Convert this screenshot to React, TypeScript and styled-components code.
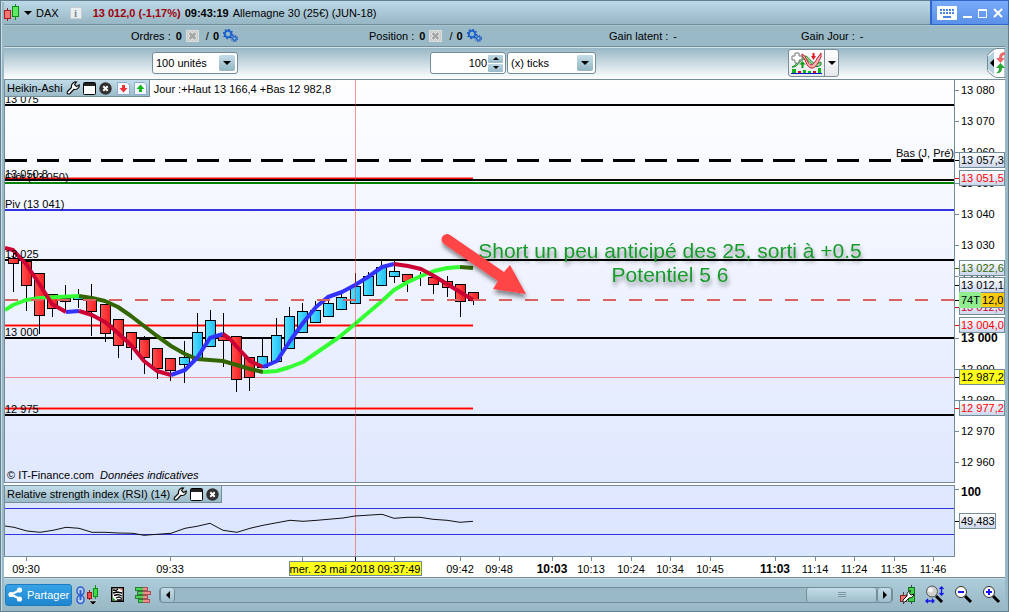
import React from "react";
import styled, { createGlobalStyle, css } from "styled-components";

const GlobalStyle = createGlobalStyle`
  *, *::before, *::after { box-sizing: border-box; }
  body {
    margin: 0;
    font-family: "Liberation Sans", Arial, sans-serif;
    font-size: 11px;
    line-height: 14px;
    color: #000;
  }
  button, input, select { font: inherit; color: inherit; margin: 0; }
  svg { display: block; flex: none; }
`;

const LINE = "#728c99";

/* ---------- frame ---------- */

const Window = styled.main`
  display: flex;
  flex-direction: column;
  min-height: 100vh;
  padding: 0 3px;
  border: 1px solid #64808f;
  background: #9ab9c7;
  box-shadow: inset 1px 1px 0 #c6dde8;
`;

const TitleBar = styled.header`
  display: flex;
  align-items: center;
  height: 24px;
  border-bottom: 1px solid ${LINE};
  background: linear-gradient(#bcd9e7, #97b6c4);
`;

const TitleMenu = styled.button`
  display: flex;
  align-items: center;
  gap: 4px;
  padding: 0;
  border: 0;
  background: none;
`;

const InfoButton = styled.button`
  width: 12px;
  height: 12px;
  margin: 0 11px;
  padding: 0;
  border: 1px solid #c9ccce;
  background: #e9eef1;
  color: #7d858a;
  font: bold 11px/10px "Liberation Serif", serif;
`;

const Quote = styled.div`
  display: flex;
  gap: 4px;
  white-space: nowrap;
`;

const Change = styled.strong`
  color: #a0000c;
`;

const WindowControls = styled.div`
  display: flex;
  align-items: center;
  gap: 6px;
  align-self: stretch;
  width: 79px;
  margin: -1px -4px -1px auto;
  padding-left: 5px;
  border: 1px solid #2f67c6;
  border-left-width: 2px;
  background: linear-gradient(#78abfa, #5b90e8);
`;

const GhostButton = styled.button`
  display: flex;
  padding: 0;
  border: 0;
  background: none;
`;

const StatusBar = styled.section`
  display: grid;
  grid-template-columns: 238fr 240fr 192fr 204fr;
  align-items: center;
  height: 22px;
  padding-left: 127px;
  border-bottom: 1px solid ${LINE};
  background: #9ab9c7;
  box-shadow: inset 0 1px 0 #a9c6d3;
`;

const Status = styled.div`
  display: flex;
  align-items: center;
  gap: 4px;
  white-space: nowrap;
`;

const Label = styled.span`
  margin-right: 1px;
`;

const Automated = styled.span`
  display: flex;
  align-items: center;
  gap: 4px;
  margin-left: 3px;
`;

const ToolBar = styled.section`
  display: grid;
  grid-template-columns: 426fr 358fr 217fr;
  height: 33px;
  border-top: 1px solid #d3e4ec;
  border-bottom: 1px solid ${LINE};
  background: linear-gradient(#98b7c5, #fff);
`;

const ToolGroup = styled.div<{ $indent?: boolean }>`
  display: flex;
  align-items: center;
  gap: 1px;
  padding-left: ${(p) => (p.$indent ? "148px" : "0")};
  padding-bottom: 2px;
`;

const fieldBox = css`
  height: 22px;
  border: 1px solid ${LINE};
  border-radius: 3px;
  background: #fff;
`;

const Field = styled.label<{ $width: number }>`
  ${fieldBox}
  position: relative;
  display: flex;
  width: ${(p) => p.$width}px;
`;

const Picker = styled.select`
  appearance: none;
  width: 100%;
  padding: 0 20px 0 3px;
  border: 0;
  background: none;
  outline: none;
`;

const PickerArrow = styled.span`
  position: absolute;
  top: 2px;
  right: 2px;
  display: grid;
  place-items: center;
  width: 16px;
  height: 16px;
  border-radius: 2px;
  background: linear-gradient(#c3dde8, #93b4c3);
  pointer-events: none;
`;

const NumberBox = styled.div`
  ${fieldBox}
  display: flex;
  align-items: center;
  width: 76px;
`;

const NumberInput = styled.input`
  flex: 1;
  min-width: 0;
  padding: 0 1px;
  border: 0;
  background: none;
  text-align: right;
  outline: none;
`;

const Steppers = styled.div`
  display: grid;
  gap: 1px;
  margin-right: 2px;
`;

const Stepper = styled.button`
  display: grid;
  place-items: center;
  width: 15px;
  height: 8px;
  padding: 0;
  border: 0;
  border-radius: 1px;
  background: linear-gradient(#bcd7e3, #98b8c7);
`;

const SplitButton = styled.div`
  display: flex;
  height: 28px;
  border: 1px solid #7b8e98;
  border-radius: 3px;
  background: linear-gradient(#fff, #e6e8ea);
`;

const SplitPart = styled.button<{ $arrow?: boolean }>`
  display: grid;
  place-items: center;
  width: ${(p) => (p.$arrow ? "14px" : "35px")};
  padding: 0;
  border: 0;
  border-left: ${(p) => (p.$arrow ? "1px solid #7b8e98" : "0")};
  background: none;
`;

const SideTab = styled(GhostButton)`
  margin-left: auto;
`;

/* ---------- charts ---------- */

const Workspace = styled.section`
  flex: 1;
  background: #fff;
`;

const ChartRow = styled.div<{ $gap?: boolean }>`
  display: flex;
  margin-bottom: ${(p) => (p.$gap ? "2px" : "0")};
`;

const Plot = styled.div<{ $from: string; $to: string; $topLine?: boolean }>`
  position: relative;
  flex: 1;
  min-width: 0;
  border: 1px solid ${LINE};
  border-top-width: ${(p) => (p.$topLine ? "1px" : "0")};
  background: linear-gradient(${(p) => p.$from}, ${(p) => p.$to});
`;

const PlotHeader = styled.div`
  position: absolute;
  top: 0;
  left: 0;
  display: flex;
  align-items: center;
  white-space: nowrap;
`;

const PlotTitle = styled.div`
  display: flex;
  align-items: center;
  gap: 3px;
  height: 17px;
  padding: 0 2px;
  border: solid ${LINE};
  border-width: 0 1px 1px 0;
  background: linear-gradient(#c2dde9, #9bbac8);
`;

const Extremes = styled.span`
  margin-left: 4px;
`;

const Credits = styled.p`
  position: absolute;
  bottom: 0;
  left: 2px;
  margin: 0;
`;

const Svg = styled.svg<{ $fluid?: boolean }>`
  width: ${(p) => (p.$fluid ? "100%" : "50px")};
  overflow: hidden;
  font-size: 11px;
`;

const TimeAxis = styled.svg`
  width: 100%;
  height: 20px;
  background: #fff;
  font-size: 11px;
`;

/* ---------- bottom bar ---------- */

const BottomBar = styled.footer`
  display: flex;
  align-items: center;
  height: 34px;
  padding: 0 4px 0 1px;
  border-top: 1px solid ${LINE};
  background: linear-gradient(#aecddb, #98b7c5);
  box-shadow: inset 0 1px 0 #c6dde8;
`;

const ShareButton = styled.button`
  display: flex;
  align-items: center;
  gap: 4px;
  height: 22px;
  padding: 0 2px;
  border: 1px solid #1d7cc0;
  border-radius: 3px;
  background: linear-gradient(#38a2e6, #1d86cf);
  color: #fff;
`;

const IconRow = styled.div<{ $gap: number; $pad: string }>`
  display: flex;
  align-items: center;
  gap: ${(p) => p.$gap}px;
  padding: ${(p) => p.$pad};
`;

const ScrollBar = styled.div`
  display: flex;
  flex: 1;
  height: 16px;
  border: 1px solid ${LINE};
  border-radius: 4px;
  background: #9ab9c7;
`;

const ScrollPart = styled.button<{ $thumb?: boolean }>`
  display: grid;
  place-items: center;
  width: ${(p) => (p.$thumb ? "71px" : "15px")};
  margin-left: ${(p) => (p.$thumb ? "auto" : "0")};
  padding: 0;
  border: solid ${LINE};
  border-width: 0 1px;
  border-radius: 3px;
  background: linear-gradient(#c3dde9, #9ebdcb);
`;

/* ---------- icons ---------- */

const Triangle = ({ dir = "down", size = 4 }: { dir?: "down" | "up" | "left" | "right"; size?: number }) => {
  const s = size;
  const shapes = {
    down: [2 * s, s, `M0 0H${2 * s}L${s} ${s}Z`],
    up: [2 * s, s, `M0 ${s}H${2 * s}L${s} 0Z`],
    left: [s, 2 * s, `M${s} 0V${2 * s}L0 ${s}Z`],
    right: [s, 2 * s, `M0 0V${2 * s}L${s} ${s}Z`],
  } as const;
  const [w, h, d] = shapes[dir];
  return (
    <svg width={w} height={h}>
      <path d={d} />
    </svg>
  );
};

const CandlesIcon = () => (
  <svg width="16" height="17" shapeRendering="crispEdges">
    <path d="M3.500 4V17" stroke="#9b2020" />
    <rect x=".5" y="6.500" width="6" height="8" fill="#f07777" stroke="#b01c1c" />
    <path d="M11.500 0V16" stroke="#0b8f10" />
    <rect x="8.500" y="2.500" width="6" height="10" fill="#5fe863" stroke="#0b8f10" />
  </svg>
);

const KeyboardIcon = () => (
  <svg width="20" height="14">
    <rect width="20" height="14" rx="1" fill="#fff" />
    <path d="M3 4H17M3 7H17" stroke="#4c84e4" strokeWidth="2" strokeDasharray="2 1" />
    <path d="M6 11H14" stroke="#4c84e4" strokeWidth="2" />
  </svg>
);

const MinimizeIcon = () => (
  <svg width="9" height="14"><path d="M0 11H9" stroke="#fff" strokeWidth="2" /></svg>
);
const MaximizeIcon = () => (
  <svg width="9" height="14"><path d="M.5 3V11.500H8.500V3" fill="none" stroke="#fff" /><path d="M0 4H9" stroke="#fff" strokeWidth="2" /></svg>
);
const CloseIcon = () => (
  <svg width="10" height="14"><path d="M1 3L9 11M9 3L1 11" stroke="#fff" strokeWidth="2" /></svg>
);

const CancelIcon = () => (
  <svg width="13" height="12">
    <rect x=".5" y=".5" width="12" height="11" fill="#c8cbc9" stroke="#dcdedd" />
    <path d="M3 2.500L10 9.500M10 2.500L3 9.500" stroke="#eceeec" strokeWidth="4" />
    <path d="M3.500 3L9.500 9M9.500 3L3.500 9" stroke="#a2a6a4" strokeWidth="2.500" />
  </svg>
);

const GearsIcon = () => (
  <svg width="16" height="14" fill="none">
    <circle cx="5" cy="5" r="3.200" stroke="#1b66cf" strokeWidth="2" />
    <circle cx="5" cy="5" r="4.500" stroke="#1b4fc0" strokeWidth="1.500" strokeDasharray="1.500 2" />
    <circle cx="11.500" cy="9.500" r="1.800" stroke="#1b66cf" strokeWidth="1.300" />
    <circle cx="11.500" cy="9.500" r="3" stroke="#1b4fc0" strokeWidth="1.200" strokeDasharray="1.200 1.150" />
  </svg>
);

const IndicatorIcon = () => (
  <svg width="31" height="22" fill="none">
    <path d="M1 15C6 14 9 4 14 4S21 16 30 10V13C22 19 19 7 14 7S7 16 1 15Z" fill="#9adf9f" stroke="#118a1d" />
    <path d="M11 2C15 3 17 13 20 13S26 6 30 1V5C28 9 25 17 20 16S15 7 11 4Z" fill="#f6b6b6" stroke="#c01b2a" />
    <path d="M4 1H8V4H11V8H8V11H4V8H1V4H4Z" fill="#fff" stroke="#777" />
    <path d="M10.500 16V12.500H8.500L11.500 9L14.500 12.500H12.500V16Z" fill="#0a9b15" />
    <path d="M21.500 1V4H20L22.500 8L25 4H23.500V1Z" fill="#e01b2a" />
    <path d="M1 17H5V21H1ZM12 18H15V21H12ZM17 19H20V21H17ZM27 16H30V21H27Z" fill="#10b21a" />
    <path d="M7 19H10V21H7ZM22 19H25V21H22Z" fill="#c0142a" />
    <path d="M0 21.500H31" stroke="#1515c8" />
  </svg>
);

const SideTabIcon = () => (
  <svg width="18" height="30" fill="none">
    <path d="M18 .5H10Q7 .5 5 3L1.500 6Q.5 7 .5 9V21Q.5 23 1.500 24L5 27Q7 29.500 10 29.500H18Z" fill="#fff" stroke={LINE} />
    <path d="M1 9V21L7 27V3Z" fill="#b6d1de" />
    <path d="M3 15L7 11V19Z" fill="#000" />
    <path d="M18 4Q12 4 12 10H9L13.500 15L18 10H15Q15 7 18 7Z" fill="#e96a6a" />
    <path d="M9 25Q12 24 12 20H9L13.500 15L18 20H15Q15 26 9 25Z" fill="#28a834" />
  </svg>
);

const WrenchIcon = () => (
  <svg width="14" height="14">
    <path
      d="M1.500 10.500L5.500 6.500Q5 3.500 7 2Q8.500 .8 10.500 1L8.500 3.500L10.500 5.500L13.200 4Q13.500 6 12 7.300Q10.300 9 8 8.300L4 12.500Q2.500 13.500 1.500 12.500Q.8 11.500 1.500 10.500Z"
      fill="#fff" stroke="#111" strokeWidth="1.200"
    />
  </svg>
);
const PanelIcon = () => (
  <svg width="13" height="13">
    <rect x=".5" y=".5" width="12" height="12" rx="1" fill="#fff" stroke="#000" />
    <rect x="1" y="1" width="11" height="3" fill="#222" />
  </svg>
);
const RoundCloseIcon = () => (
  <svg width="13" height="13">
    <circle cx="6.500" cy="6.500" r="6.200" fill="#333" />
    <path d="M4.300 4.300L8.700 8.700M8.700 4.300L4.300 8.700" stroke="#fff" strokeWidth="2" />
  </svg>
);
const PageArrowIcon = ({ up }: { up?: boolean }) => (
  <svg width="13" height="13">
    <path d="M.5 .5H10L12.500 3V12.500H.5Z" fill="#f3f7ff" stroke="#8fa9d2" />
    {up ? (
      <path d="M6.500 2.500L10.500 7H8V10H5V7H2.500Z" fill="#17b51e" />
    ) : (
      <path d="M6.500 10.500L10.500 6H8V3H5V6H2.500Z" fill="#ee2f35" />
    )}
  </svg>
);

const ShareIcon = () => (
  <svg width="15" height="15" fill="#fff">
    <path d="M12 3L3 7.500L12 12" fill="none" stroke="#fff" strokeWidth="2" />
    <circle cx="11.500" cy="3" r="2.600" /><circle cx="3" cy="7.500" r="2.600" /><circle cx="11.500" cy="12" r="2.600" />
  </svg>
);

const LinkCandlesIcon = () => (
  <svg width="24" height="20" fill="none">
    <g stroke="#2c5fd0" strokeWidth="1.500">
      <rect x="1" y="2" width="7" height="8" rx="3.500" fill="#b7cdf5" />
      <rect x="1" y="10.500" width="7" height="8" rx="3.500" fill="#b7cdf5" />
      <path d="M4.500 5V15" strokeWidth="2" />
    </g>
    <path d="M13.500 5V15" stroke="#a01818" />
    <rect x="11.500" y="7.500" width="4" height="6" fill="#ef4a4a" stroke="#a01818" />
    <path d="M19.500 0V14" stroke="#0b8f10" />
    <rect x="17.500" y="3.500" width="4" height="8" fill="#3fdc48" stroke="#0b8f10" />
    <path d="M13 16H21L17 20Z" fill="#000" stroke="#fff" strokeWidth=".5" />
  </svg>
);

const ReportIcon = () => (
  <svg width="13" height="15">
    <rect x=".75" y=".75" width="11.500" height="13.500" fill="#fff" stroke="#000" strokeWidth="1.500" />
    <path d="M2 3L5 3.500L7 2M2 6L6 5L11 6M3 8.500L7 7.500L11 9M5 11L8 10L11 11.500M6 13H11" stroke="#000" strokeWidth="1.300" fill="none" />
    <path d="M8 1.500H11.500V4Z" fill="#ee6060" /><path d="M1.500 10V13.500H5Z" fill="#22a02a" />
  </svg>
);

const OrderBookIcon = () => (
  <svg width="16" height="16" shapeRendering="crispEdges">
    <path d="M0 0H8V4H0ZM2 4H8V8H2ZM0 8H8V12H0ZM3 12H8V16H3Z" fill="#2e7a36" />
    <path d="M8 0H13V4H8ZM8 4H16V8H8ZM8 8H13V12H8ZM8 12H15V16H8Z" fill="#a65252" />
    <path d="M1 1H8V3H1ZM3 5H8V7H3ZM1 9H8V11H1ZM4 13H8V15H4Z" fill="#4ad455" />
    <path d="M8 1H12V3H8ZM8 5H15V7H8ZM8 9H12V11H8ZM8 13H14V15H8Z" fill="#f38d8d" />
  </svg>
);

const ChartSettingsIcon = () => (
  <svg width="16" height="20">
    <path d="M3.500 7V19M11.500 0V19" stroke="#444" />
    <rect x=".5" y="10.500" width="6" height="6" fill="#ef7272" stroke="#8c2222" />
    <rect x="8.500" y="2.500" width="6" height="14" fill="#41d24a" stroke="#17701c" />
    <path d="M3 15L7 11Q6.500 8 8.500 6.500L10.500 5.500L9.500 8.500L11 10L14 9Q13.500 12 11.500 12.500L9 13L5 17Q3.500 17.500 3 16.500Z" fill="#fff" stroke="#111" />
  </svg>
);

const Lens = ({ children }: { children?: React.ReactNode }) => (
  <svg width="19" height="19" fill="none">
    <path d="M11 11L17 17" stroke="#000" strokeWidth="3" />
    <circle cx="7" cy="7" r="5.500" fill="#fff" stroke="#333" />
    {children}
  </svg>
);
const ZoomRangeIcon = () => (
  <svg width="20" height="19" fill="none">
    <path d="M11 11L17 17" stroke="#000" strokeWidth="3" />
    <circle cx="7" cy="6.500" r="5.500" fill="#cfcfcf" stroke="#555" />
    <circle cx="5.500" cy="5" r="2.500" fill="#f4f4f4" />
    <path d="M1 16H9M3 14L1 16L3 18M7 14L9 16L7 18M16.500 2V10M14.500 4L16.500 2L18.500 4M14.500 8L16.500 10L18.500 8" stroke="#1414ee" strokeWidth="1.300" />
  </svg>
);

/* ---------- price chart data (canvas coordinates) ---------- */

type Candle = [x: number, top: number, bottom: number, high: number, low: number, rising?: boolean];

const candles: Candle[] = [
  [8, 258, 263, 248, 292], [21, 261, 285, 261, 311], [34, 273, 315, 273, 334],
  [47, 294, 308, 294, 317], [60, 298, 301, 285, 312], [73, 297, 299, 289, 308, true],
  [86, 299, 311, 284, 336], [100, 304, 333, 304, 342], [113, 319, 345, 319, 358],
  [126, 332, 347, 332, 360], [139, 339, 357, 336, 374], [152, 348, 368, 348, 379],
  [165, 358, 370, 358, 381], [179, 357, 364, 341, 383, true], [192, 332, 359, 313, 359, true],
  [205, 320, 346, 310, 346, true], [218, 336, 340, 313, 367], [231, 336, 379, 336, 392],
  [244, 357, 377, 357, 391], [257, 356, 367, 338, 367, true], [271, 335, 361, 318, 361, true],
  [284, 316, 348, 307, 348, true], [297, 311, 332, 303, 332, true], [310, 310, 322, 301, 322, true],
  [323, 303, 316, 298, 316, true], [336, 297, 309, 293, 309, true], [350, 286, 303, 273, 303, true],
  [363, 276, 295, 272, 295, true], [376, 267, 285, 260, 285, true], [389, 271, 276, 260, 283, true],
  [402, 274, 281, 274, 292], [415, 277, 277, 272, 286], [428, 277, 284, 277, 294],
  [442, 281, 287, 276, 297], [455, 284, 301, 284, 317], [468, 292, 300, 292, 305],
];

const averages: [string, string][] = [
  ["#33ff33", "5,310 13,305 26,300 40,298 57,297 79,296"],
  ["#336600", "79,296 92,298 105,301 118,307 131,316 144,326 157,336 171,346 185,354 197,359 223,361 240,366 250,369 263,372"],
  ["#33ff33", "263,372 277,371 290,367 303,362 316,353 338,338 355,324 382,301 394,290 408,282 421,276 434,271 447,268 460,267"],
  ["#336600", "460,267 473,268"],
  ["#cc0033", "5,248 13,250 26,264 40,285 52,304 66,312"],
  ["#3333ff", "66,312 79,311"],
  ["#cc0033", "79,311 92,315 105,322 118,333 131,345 144,361 157,371 171,375"],
  ["#3333ff", "171,375 185,370 197,358 210,338 223,334"],
  ["#cc0033", "223,334 230,339 237,347 250,361 263,367"],
  ["#3333ff", "263,367 277,361 290,341 303,323 316,307 328,297 342,292 355,285 368,277 382,267 394,264"],
  ["#cc0033", "394,264 408,266 421,269 434,276 447,284 460,292 473,300"],
];

const levels: { y: number; h: number; color: string }[] = [
  { y: 104, h: 2, color: "#000" },
  { y: 179, h: 2, color: "#000" },
  { y: 182, h: 2, color: "#008000" },
  { y: 209, h: 2, color: "#3333dd" },
  { y: 259, h: 2, color: "#000" },
  { y: 337, h: 2, color: "#000" },
  { y: 414, h: 2, color: "#000" },
];

const levelLabels: [string, number][] = [
  ["13 075", 103], ["13 050.8", 178], ["Clôt (13 050)", 181], ["Piv (13 041)", 208],
  ["13 025", 258], ["13 000", 336], ["12 975", 413],
];

const RSI =
  "5,526 14,527.3 27,531 40,532.3 53,530.3 66,527.3 79,528.3 92,532.3 105,532.3 118,533 133,533.3 144,535.3 157,534.3 171,533.3 185,528.3 197,526.3 210,523.3 223,530.3 237,532.3 250,528.3 263,525.3 277,522.7 290,520.3 303,521.3 317,520.3 343,518 355,516 382,514.3 394,518.3 408,517.3 420,517.3 433,519.3 447,520.3 460,522.3 473,521.3";

const PriceCanvas = () => (
  <Svg $fluid height="402">
    <defs>
      <linearGradient id="bear"><stop offset="0" stopColor="#ff5050" /><stop offset="1" stopColor="#f52020" /></linearGradient>
      <linearGradient id="bull"><stop offset="0" stopColor="#55e0ff" /><stop offset="1" stopColor="#20bdf5" /></linearGradient>
      <filter id="drop" x="-20%" y="-20%" width="150%" height="160%">
        <feDropShadow dx="1" dy="4" stdDeviation="2" floodColor="#000" floodOpacity=".45" />
      </filter>
    </defs>
    <g transform="translate(0 -80)" shapeRendering="crispEdges">
      <rect y="377" width="100%" height="1" fill="#f0323280" />
      {[178, 325, 408].map((y) => (
        <g key={y}>
          <rect y={y - 1} width="468" height="3" fill="#ff8080" />
          <rect y={y} width="468" height="1" fill="#f00" />
        </g>
      ))}
      {levels.map((l) => <rect key={l.y} y={l.y} width="100%" height={l.h} fill={l.color} />)}
      <line x2="100%" y1="160.500" y2="160.500" stroke="#000" strokeWidth="3" strokeDasharray="22 10" />
    </g>
    <text x="100%" y="77" textAnchor="end">Bas (J, Pré)</text>
    <g transform="translate(-5 -80)">
      <g shapeRendering="crispEdges">
        {candles.map(([x, top, bottom, high, low, rising]) => (
          <g key={x}>
            <rect x={x + 5} y={high} width="1" height={low - high} />
            <rect x={x + 0.5} y={top + 0.5} width="10" height={bottom - top} fill={rising ? "url(#bull)" : "url(#bear)"} stroke="#000" />
          </g>
        ))}
      </g>
      <g fill="none" strokeWidth="4" strokeLinejoin="round">
        {averages.map(([color, points], i) => <polyline key={i} points={points} stroke={color} />)}
      </g>
      {levelLabels.map(([text, y]) => <text key={text} x="5" y={y}>{text}</text>)}
    </g>
    <g transform="translate(0 -80)" shapeRendering="crispEdges">
      <line x2="100%" y1="300" y2="300" stroke="#d96262" strokeWidth="2" strokeDasharray="13 13" />
      <rect x="350" y="80" width="1" height="402" fill="#f0323280" />
    </g>
    <g transform="translate(-5 -80)">
      <g fill="#199a2b" fontSize="21" textAnchor="middle" filter="url(#drop)">
        <text x="670" y="258">Short un peu anticipé des 25, sorti à +0.5</text>
        <text x="670" y="282">Potentiel 5 6</text>
      </g>
      <path
        d="M450 235L504 272L510 265L526 294L493 289L498 281L444 244A5 5 0 0 1 450 235Z"
        fill="#ff4444" filter="url(#drop)"
      />
    </g>
  </Svg>
);

type Tag = { y: number; text: string; color?: string; fill?: string };

const priceTicks = [13080, 13070, 13060, 13050, 13040, 13030, 13020, 13010, 13000, 12990, 12980, 12970, 12960];

const priceTags: Tag[] = [
  { y: 160, text: "13 057,3" },
  { y: 178, text: "13 051,5", color: "#f00" },
  { y: 268, text: "13 022,6", color: "#336600" },
  { y: 307, text: "13 012,0", color: "#cc0033" },
  { y: 285, text: "13 012,1" },
  { y: 325, text: "13 004,0", color: "#f00" },
  { y: 377, text: "12 987,2", fill: "#ffff1a" },
  { y: 408, text: "12 977,2", color: "#f00" },
];

const AxisTag = ({ y, text, color = "#000", fill = "url(#tag)", width = 45 }: Tag & { width?: number }) => (
  <g>
    <rect y={y} width="4" height="1" fill={color} />
    <rect x="4.500" y={y - 7.500} width={width} height="15" fill={fill} stroke={LINE} />
    <text x="6" y={y + 4} fill={color}>{text}</text>
  </g>
);

const PriceAxis = () => (
  <Svg height="403">
    <defs>
      <linearGradient id="tag" x2="0" y2="1"><stop offset="0" stopColor="#fff" /><stop offset="1" stopColor="#cbd5ec" /></linearGradient>
      <linearGradient id="gold"><stop offset="0" stopColor="#ffe02e" /><stop offset="1" stopColor="#f8c200" /></linearGradient>
    </defs>
    <g transform="translate(0 -80)">
      {priceTicks.map((price) => {
        const y = Math.round(90 + (13080 - price) * 3.1);
        const major = price === 13000;
        return (
          <g key={price}>
            <rect y={y} width="4" height="1" fill={LINE} />
            <text x="6" y={y + 4} fontWeight={major ? 700 : 400} fontSize={major ? 12 : 11}>
              {`${Math.floor(price / 1000)} ${String(price % 1000).padStart(3, "0")}`}
            </text>
          </g>
        );
      })}
      {priceTags.map((t) => <AxisTag key={t.text} {...t} />)}
      <rect y="300" width="4" height="1" />
      <rect x="4.500" y="292.500" width="45" height="15" fill="url(#gold)" stroke={LINE} />
      <rect x="4" y="292" width="22" height="16" fill="#90ee90" />
      <text x="6" y="304">74T</text>
      <text x="27" y="304">12,0</text>
    </g>
  </Svg>
);

const RsiCanvas = () => (
  <Svg $fluid height="70">
    <g transform="translate(0 -486)">
      <rect y="508" width="100%" height="1" fill="#3333dd" />
      <rect y="534" width="100%" height="1" fill="#3333dd" />
      <rect x="350" y="486" width="1" height="70" fill="#f0323280" />
      <polyline points={RSI} transform="translate(-5 0)" fill="none" stroke="#111" />
    </g>
  </Svg>
);

const times: { x: number; text: string; major?: boolean }[] = [
  { x: 26, text: "09:30" }, { x: 170, text: "09:33" }, { x: 302, text: "" }, { x: 394, text: "" },
  { x: 460, text: "09:42" }, { x: 499, text: "09:48" }, { x: 552, text: "10:03", major: true },
  { x: 591, text: "10:13" }, { x: 631, text: "10:24" }, { x: 670, text: "10:34" },
  { x: 710, text: "10:45" }, { x: 775, text: "11:03", major: true }, { x: 815, text: "11:14" },
  { x: 854, text: "11:24" }, { x: 894, text: "11:35" }, { x: 933, text: "11:46" },
];

export default function App() {
  return (
    <>
      <GlobalStyle />
      <Window>
        <TitleBar>
          <TitleMenu>
            <CandlesIcon />
            <Triangle />
            <span>DAX</span>
          </TitleMenu>
          <InfoButton aria-label="Informations">i</InfoButton>
          <Quote>
            <Change>13 012,0 (-1,17%)</Change>
            <strong>09:43:19</strong>
            <span>Allemagne 30 (25€) (JUN-18)</span>
          </Quote>
          <WindowControls>
            <GhostButton aria-label="Clavier"><KeyboardIcon /></GhostButton>
            <GhostButton aria-label="Réduire"><MinimizeIcon /></GhostButton>
            <GhostButton aria-label="Agrandir"><MaximizeIcon /></GhostButton>
            <GhostButton aria-label="Fermer"><CloseIcon /></GhostButton>
          </WindowControls>
        </TitleBar>

        <StatusBar>
          {["Ordres :", "Position :"].map((label) => (
            <Status key={label}>
              <Label>{label}</Label>
              <strong>0</strong>
              <GhostButton aria-label="Annuler"><CancelIcon /></GhostButton>
              <Automated>/ <strong>0</strong></Automated>
              <GearsIcon />
            </Status>
          ))}
          <Status><Label>Gain latent :</Label> -</Status>
          <Status><Label>Gain Jour :</Label> -</Status>
        </StatusBar>

        <ToolBar>
          <ToolGroup $indent>
            <Field $width={86}>
              <Picker aria-label="Nombre d'unités"><option>100 unités</option></Picker>
              <PickerArrow><Triangle /></PickerArrow>
            </Field>
          </ToolGroup>
          <ToolGroup>
            <NumberBox>
              <NumberInput aria-label="Période" defaultValue="100" />
              <Steppers>
                <Stepper aria-label="Augmenter"><Triangle dir="up" size={3} /></Stepper>
                <Stepper aria-label="Diminuer"><Triangle size={3} /></Stepper>
              </Steppers>
            </NumberBox>
            <Field $width={89}>
              <Picker aria-label="Type de période"><option>(x) ticks</option></Picker>
              <PickerArrow><Triangle /></PickerArrow>
            </Field>
          </ToolGroup>
          <ToolGroup>
            <SplitButton>
              <SplitPart aria-label="Indicateurs"><IndicatorIcon /></SplitPart>
              <SplitPart $arrow aria-label="Liste des indicateurs"><Triangle /></SplitPart>
            </SplitButton>
            <SideTab aria-label="Ordres rapides"><SideTabIcon /></SideTab>
          </ToolGroup>
        </ToolBar>

        <Workspace>
          <ChartRow $gap>
            <Plot $from="#fefeff" $to="#e0e8ff">
              <PriceCanvas />
              <PlotHeader>
                <PlotTitle>
                  Heikin-Ashi
                  <GhostButton aria-label="Configurer"><WrenchIcon /></GhostButton>
                  <GhostButton aria-label="Détacher"><PanelIcon /></GhostButton>
                  <GhostButton aria-label="Fermer"><RoundCloseIcon /></GhostButton>
                  <IconRow $gap={4} $pad="0 0 0 2px">
                    <GhostButton aria-label="Descendre"><PageArrowIcon /></GhostButton>
                    <GhostButton aria-label="Monter"><PageArrowIcon up /></GhostButton>
                  </IconRow>
                </PlotTitle>
                <Extremes>Jour :+Haut 13 166,4 +Bas 12 982,8</Extremes>
              </PlotHeader>
              <Credits>© IT-Finance.com&nbsp; <em>Données indicatives</em></Credits>
            </Plot>
            <PriceAxis />
          </ChartRow>
          <ChartRow>
            <Plot $from="#e0e8ff" $to="#dae5ff" $topLine>
              <RsiCanvas />
              <PlotHeader>
                <PlotTitle>
                  Relative strength index (RSI) (14)
                  <GhostButton aria-label="Configurer"><WrenchIcon /></GhostButton>
                  <GhostButton aria-label="Détacher"><PanelIcon /></GhostButton>
                  <GhostButton aria-label="Fermer"><RoundCloseIcon /></GhostButton>
                </PlotTitle>
              </PlotHeader>
            </Plot>
            <Svg height="72">
              <g transform="translate(0 -485)">
                <rect y="489" width="4" height="1" fill={LINE} />
                <text x="6" y="496" fontWeight="700" fontSize="12">100</text>
                <AxisTag y={521} text="49,483" width={36} />
              </g>
            </Svg>
          </ChartRow>
          <TimeAxis>
            <g transform="translate(-4 -557)">
              {times.map(({ x, text, major }) => (
                <g key={x}>
                  <rect x={x} y="557" width="1" height="4" fill={LINE} />
                  <text x={x} y="573" textAnchor="middle" fontWeight={major ? 700 : 400} fontSize={major ? 12 : 11}>{text}</text>
                </g>
              ))}
              <rect x="355" y="557" width="1" height="4" />
              <rect x="289.500" y="561.500" width="132" height="14" fill="#ffff1a" stroke={LINE} />
              <text x="355" y="573" textAnchor="middle">mer. 23 mai 2018 09:37:49</text>
            </g>
          </TimeAxis>
        </Workspace>

        <BottomBar>
          <ShareButton><ShareIcon />Partager</ShareButton>
          <IconRow $gap={11} $pad="0 8px 0 4px">
            <GhostButton aria-label="Lier"><LinkCandlesIcon /></GhostButton>
            <GhostButton aria-label="Rapport"><ReportIcon /></GhostButton>
            <GhostButton aria-label="Carnet d'ordres"><OrderBookIcon /></GhostButton>
          </IconRow>
          <ScrollBar>
            <ScrollPart aria-label="Reculer"><Triangle dir="left" /></ScrollPart>
            <ScrollPart $thumb aria-label="Position">
              <svg width="8" height="6"><path d="M0 .5H8M0 2.500H8M0 4.500H8" stroke="#7d97a4" /></svg>
            </ScrollPart>
            <ScrollPart aria-label="Avancer"><Triangle dir="right" /></ScrollPart>
          </ScrollBar>
          <IconRow $gap={9} $pad="0 0 0 7px">
            <GhostButton aria-label="Réglages du graphique"><ChartSettingsIcon /></GhostButton>
            <GhostButton aria-label="Ajuster le zoom"><ZoomRangeIcon /></GhostButton>
            <GhostButton aria-label="Zoom arrière"><Lens><path d="M4 7H10" stroke="#1414ee" strokeWidth="2" /></Lens></GhostButton>
            <GhostButton aria-label="Zoom avant"><Lens><path d="M4 7H10M7 4V10" stroke="#1414ee" strokeWidth="2" /></Lens></GhostButton>
          </IconRow>
        </BottomBar>
      </Window>
    </>
  );
}
